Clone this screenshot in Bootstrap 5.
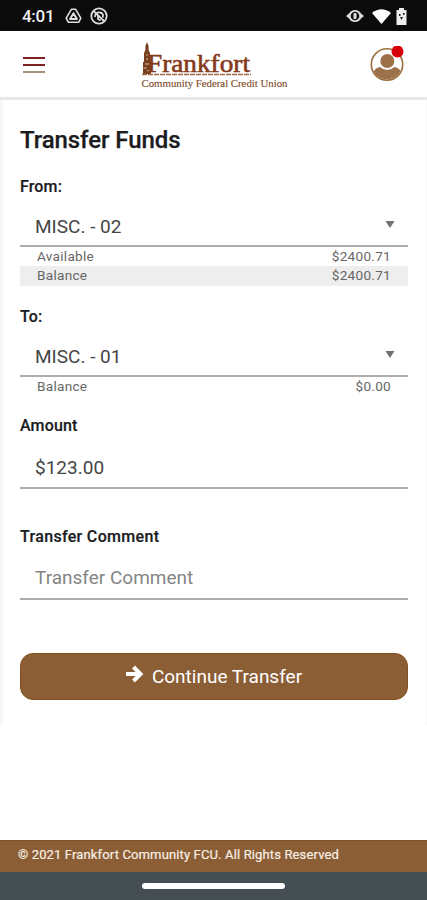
<!DOCTYPE html>
<html lang="en">
<head>
<meta charset="utf-8">
<meta name="viewport" content="width=device-width, initial-scale=1">
<title>Transfer Funds</title>
<link href="https://cdn.jsdelivr.net/npm/bootstrap@5.3.0/dist/css/bootstrap.min.css" rel="stylesheet">
<style>
  body { font-family: Roboto, "Liberation Sans", sans-serif; color: #1c1c1f; background: #fff; height: 900px; overflow: hidden; }
  .status-bar { height: 31px; background: #0b0b0b; color: #f0f0f0; padding: 1px 19px 0 22px; }
  .clock { font-size: 17px; font-weight: 500; line-height: 28px; width: 43px; letter-spacing: -.3px; }
  .app-bar { height: 69px; border-bottom: 3px solid #e9e6e6; padding: 0 21px 0 23px; }
  .menu-stack { gap: 5px; margin-top: 1px; }
  .menu-line { width: 22px; height: 2px; background: #7d2222; }
  .menu-line.tan { background: #a8917a; }
  .panel { height: 625px; padding: 24px 18px 0 17px; border-left: 3px solid #f7f7f7; border-right: 1px solid #f8f8f8; }
  .page-title { font-size: 24px; font-weight: 500; line-height: 32px; letter-spacing: -.08px; -webkit-text-stroke: .25px; }
  .field-label { font-size: 16px; font-weight: 500; line-height: 24px; letter-spacing: .15px; display: block; -webkit-text-stroke: .2px; }
  .field-line { border: 0; border-bottom: 2px solid #adadad; border-radius: 0; height: 48px; padding: 9px 13px 0 15px; font-size: 19px; line-height: 28px; color: #454545; background: transparent; }
  input.field-line { height: 51px; padding-top: 8px; }
  input.field-amount { padding-top: 10px; }
  .field-line:focus { box-shadow: none; }
  .field-line::placeholder { color: #858585; opacity: 1; }
  .info-row { height: 19px; font-size: 13.6px; line-height: 19px; padding: 0 17px; color: #666; letter-spacing: .27px; }
  .info-row.shaded { background: #eee; height: 20px; }
  .lbl-from { margin-top: 19px; }
  .lbl-to { margin-top: 19px; }
  .lbl-amount { margin-top: 18px; }
  .lbl-comment { margin-top: 36px; letter-spacing: .32px; }
  .btn-transfer { --bs-btn-color: #fff; --bs-btn-bg: #8b5e36; --bs-btn-border-color: #84501f; height: 47px; border-radius: 13px; font-size: 19px; margin-top: 53px; padding-top: 8px; }
  .site-footer { height: 32px; background: #8b5e36; border-top: 1px solid #84501f; color: #f8eee4; font-size: 13px; line-height: 27px; letter-spacing: .14px; padding-left: 18px; -webkit-text-stroke: .2px; }
  .gesture { height: 28px; background: #454e53; }
  .gesture span { width: 143px; height: 6px; border-radius: 3px; background: #fff; }
</style>
</head>
<body class="d-flex flex-column">
<div class="status-bar d-flex align-items-center flex-shrink-0">
  <span class="clock">4:01</span>
  <svg width="17" height="16" viewBox="0 0 17 16" fill="none" stroke="#ddd" stroke-width="1.6" stroke-linejoin="round"><path d="M6.5 1.2h4l5.3 9-2 4H3.2l-2-4z"/><path d="M8.5 5.2l3.4 5.8H5.1z" stroke-width="2"/></svg>
  <svg class="ms-2" width="18" height="18" viewBox="0 0 18 18" fill="none" stroke="#ddd" stroke-width="1.8"><circle cx="9" cy="9" r="7.7"/><path d="M3.5 4l11 10.5M5 10c0-4 3-5 5-4.5 3 .5 3.500 3 2.700 5M8 8.500v4M10.500 13.500L8 12"/></svg>
  <svg class="ms-auto" width="18" height="14" viewBox="0 0 18 14"><path d="M0 7l3-2.500Q5 1 9 1t6 3.500L18 7l-3 2.500Q13 13 9 13T3 9.500z" fill="#ddd"/><circle cx="9" cy="7" r="4.300" fill="#111"/><rect x="7.500" y="4" width="3" height="6" rx="1" fill="#ddd"/></svg>
  <svg class="ms-2" width="19" height="15" viewBox="0 0 19 15"><path d="M0 4Q9.500-3.500 19 4L9.500 15z" fill="#fff"/></svg>
  <svg class="ms-1" width="13" height="17" viewBox="0 0 13 17"><path d="M4 0h5v2h2.500v15h-10V2H4z" fill="#eee"/><path d="M4 6h1.500v2H4zM8 5h1.500v2H8zM5 9h3l-1.500 3z" fill="#222"/></svg>
</div>
<header class="app-bar d-flex justify-content-between align-items-center flex-shrink-0">
  <div class="menu-stack d-flex flex-column" role="button" aria-label="Menu">
    <span class="menu-line"></span><span class="menu-line"></span><span class="menu-line tan"></span>
  </div>
  <svg width="150" height="54" viewBox="1 0 150 54" font-family="'Liberation Serif', serif" class="ms-3">
    <path d="M7 5l1.600 4v4l1.400 3v9h1v12H3V25h1v-9l1.400-3V9z" fill="#76401f"/>
    <path d="M6 18h2M6 22h2M5 27h4M3.500 31h3M7 34h3" stroke="#e2c6ac" stroke-width="1.200"/>
    <text x="7" y="34.500" font-size="26" fill="#863a1c" stroke="#863a1c" stroke-width=".6" textLength="103" lengthAdjust="spacingAndGlyphs">Frankfort</text>
    <path d="M2 37.500h109" stroke="#a06a48" stroke-width="1.500" stroke-dasharray="5 1"/>
    <text x="1.500" y="49.500" font-size="9.800" fill="#82502f" stroke="#82502f" stroke-width=".15" textLength="146" lengthAdjust="spacingAndGlyphs">Community Federal Credit Union</text>
  </svg>
  <svg width="36" height="36" viewBox="0 0 36 36">
    <defs><clipPath id="disc"><circle cx="17" cy="18.500" r="15"/></clipPath></defs>
    <circle cx="17" cy="18.500" r="15.700" fill="#fff" stroke="#9b6f3d" stroke-width="1.600"/>
    <g fill="#9c7049" clip-path="url(#disc)"><circle cx="17.300" cy="15" r="7"/><path d="M3 36V28Q4 22 10 21q7 6 14.500 0Q30 22 32 28v8z"/></g>
    <circle cx="27.500" cy="5.500" r="6" fill="#d6000d"/>
  </svg>
</header>
<main class="panel flex-shrink-0">
  <h1 class="page-title mb-0">Transfer Funds</h1>
  <form>
    <span class="field-label lbl-from">From:</span>
    <div class="field-line d-flex justify-content-between align-items-center" role="combobox" aria-label="From">
      <span>MISC. - 02</span>
      <svg class="mb-1" width="10" height="7" viewBox="0 0 10 7"><path d="M.5 0h9L5 7z" fill="#707070"/></svg>
    </div>
    <div class="info-row d-flex justify-content-between"><span>Available</span><span>$2400.71</span></div>
    <div class="info-row shaded d-flex justify-content-between"><span>Balance</span><span>$2400.71</span></div>
    <span class="field-label lbl-to">To:</span>
    <div class="field-line d-flex justify-content-between align-items-center" role="combobox" aria-label="To">
      <span>MISC. - 01</span>
      <svg class="mb-1" width="10" height="7" viewBox="0 0 10 7"><path d="M.5 0h9L5 7z" fill="#707070"/></svg>
    </div>
    <div class="info-row d-flex justify-content-between"><span>Balance</span><span>$0.00</span></div>
    <label class="field-label lbl-amount" for="amount">Amount</label>
    <input id="amount" class="form-control field-line field-amount" value="$123.00">
    <label class="field-label lbl-comment" for="comment">Transfer Comment</label>
    <input id="comment" class="form-control field-line" placeholder="Transfer Comment">
    <button type="button" class="btn btn-transfer w-100 d-flex justify-content-center align-items-center gap-2">
      <svg class="mb-2" width="18" height="18" viewBox="0 0 18 18" fill="none" stroke="#fff" stroke-width="4"><path d="M0 9h14M7.500 2l7 7-7 7"/></svg>
      <span>Continue Transfer</span>
    </button>
  </form>
</main>
<footer class="site-footer mt-auto flex-shrink-0">© 2021 Frankfort Community FCU. All Rights Reserved</footer>
<div class="gesture d-flex justify-content-center align-items-center flex-shrink-0"><span></span></div>
<script src="https://cdn.jsdelivr.net/npm/bootstrap@5.3.0/dist/js/bootstrap.bundle.min.js"></script>
</body>
</html>
